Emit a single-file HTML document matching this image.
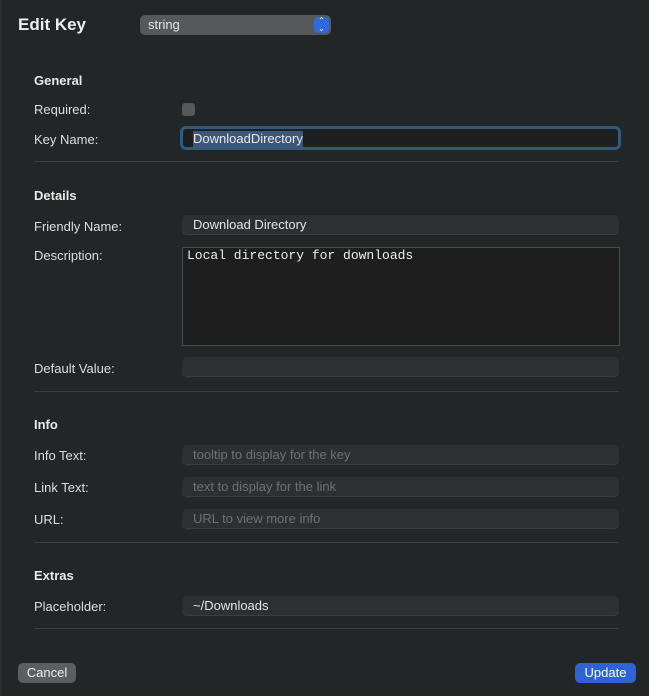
<!DOCTYPE html>
<html><head><style>
body{margin:0;width:649px;height:696px;background:#222627;font-family:"Liberation Sans",sans-serif;color:#e4e4e4;position:relative;overflow:hidden;font-size:13px}
.a{position:absolute}
.lbl{position:absolute;left:34px;font-size:13px;color:#dedede}
.h{position:absolute;left:34px;font-size:13px;font-weight:bold;color:#e8e8e8}
.f{position:absolute;left:182px;width:437px;height:20px;background:#2c3032;border-radius:5px;box-shadow:inset 0 -1px 0 #3a3e40;font-size:13px;line-height:20px;padding-left:11px;box-sizing:border-box}
.ph{color:#6d7173}
.sep{position:absolute;left:34px;width:585px;height:1px;background:#3a3e40}
</style></head><body>
<div class="a" style="left:0;top:0;width:2px;height:696px;background:#2c3032"></div>
<div class="a" style="left:18px;top:15px;font-size:17px;font-weight:bold;color:#eee">Edit Key</div>
<div class="a" style="left:140px;top:15px;width:191px;height:20px;background:#56595a;border-radius:5px;font-size:13px;line-height:20px;padding-left:8px;box-sizing:border-box">string</div>
<div class="a" style="left:314px;top:17px;width:15px;height:16px;background:#2f6ad8;border-radius:4px;color:#fff;font-size:8px;line-height:8px;text-align:center">⌃<br>⌄</div>
<div class="h" style="top:73px">General</div>
<div class="lbl" style="top:102px">Required:</div>
<div class="a" style="left:182px;top:103px;width:13px;height:13px;background:#55595b;border-radius:3px"></div>
<div class="lbl" style="top:132px">Key Name:</div>
<div class="a" style="left:180px;top:126px;width:441px;height:24px;border:3px solid #35597a;border-radius:6px;box-sizing:border-box;background:#1e1f20"></div>
<div class="a" style="left:193px;top:131px;height:16px;background:#3c5778;font-size:13px;line-height:16px;color:#e8e8e8">DownloadDirectory</div>
<div class="sep" style="top:161px"></div>
<div class="h" style="top:188px">Details</div>
<div class="lbl" style="top:219px">Friendly Name:</div>
<div class="f" style="top:215px">Download Directory</div>
<div class="lbl" style="top:248px">Description:</div>
<div class="a" style="left:182px;top:247px;width:438px;height:99px;background:#1e1e1e;border:1px solid #4a4d4f;box-sizing:border-box;font-family:'Liberation Mono',monospace;font-size:13px;padding:0 4px;color:#eee">Local directory for downloads</div>
<div class="lbl" style="top:361px">Default Value:</div>
<div class="f" style="top:357px"></div>
<div class="sep" style="top:391px"></div>
<div class="h" style="top:417px">Info</div>
<div class="lbl" style="top:448px">Info Text:</div>
<div class="f ph" style="top:445px">tooltip to display for the key</div>
<div class="lbl" style="top:480px">Link Text:</div>
<div class="f ph" style="top:477px">text to display for the link</div>
<div class="lbl" style="top:512px">URL:</div>
<div class="f ph" style="top:509px">URL to view more info</div>
<div class="sep" style="top:542px"></div>
<div class="h" style="top:568px">Extras</div>
<div class="lbl" style="top:599px">Placeholder:</div>
<div class="f" style="top:596px">~/Downloads</div>
<div class="sep" style="top:628px"></div>
<div class="a" style="left:18px;top:663px;width:58px;height:20px;background:#5b5e5f;border-radius:5px;text-align:center;line-height:20px;color:#eee">Cancel</div>
<div class="a" style="left:575px;top:663px;width:61px;height:20px;background:#2e63d6;border-radius:5px;text-align:center;line-height:20px;color:#fff">Update</div>
</body></html>
